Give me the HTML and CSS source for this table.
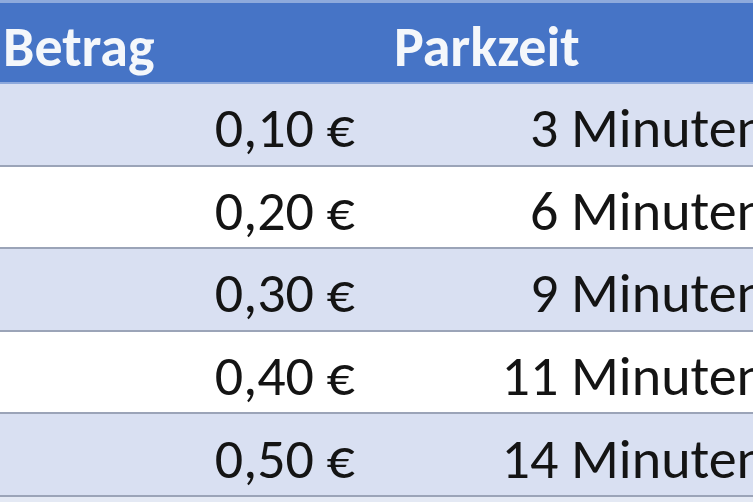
FILE: index.html
```html
<!DOCTYPE html>
<html lang="de">
<head>
<meta charset="utf-8">
<title>Parkgebühren</title>
<link rel="stylesheet" href="styles.css">
</head>
<body>
<div class="sheet">
  <div class="row head">
    <div class="cell c1">Betrag</div>
    <div class="cell c2">Parkzeit</div>
  </div>
  <div class="row band">
    <div class="cell c1 num">0,10 €</div>
    <div class="cell c2 num">3 Minuten</div>
  </div>
  <div class="row plain">
    <div class="cell c1 num">0,20 €</div>
    <div class="cell c2 num">6 Minuten</div>
  </div>
  <div class="row band">
    <div class="cell c1 num">0,30 €</div>
    <div class="cell c2 num">9 Minuten</div>
  </div>
  <div class="row plain">
    <div class="cell c1 num">0,40 €</div>
    <div class="cell c2 num">11 Minuten</div>
  </div>
  <div class="row band">
    <div class="cell c1 num">0,50 €</div>
    <div class="cell c2 num">14 Minuten</div>
  </div>
</div>
</body>
</html>
```
FILE: styles.css
```css
html, body {
  margin: 0;
  padding: 0;
  width: 753px;
  height: 502px;
  overflow: hidden;
  background: #e4e9f4;
}

.sheet {
  display: flex;
  flex-direction: column;
  width: 800px;
  font-family: "Carlito", "Lato", "Open Sans", sans-serif;
  font-size: 56px;
  color: #141414;
}

.row {
  display: grid;
  grid-template-columns: 386px 394px;
  height: 80.6px;
  border-bottom: 2px solid #9ba4b8;
}

.row.head {
  height: 79px;
  background: #4674c6;
  border-top: 3px solid #8eaadc;
  border-bottom: 2px solid #8ea9dc;
  color: #f4f7fb;
  font-weight: bold;
}

.band { background: #d9e0f2; }
.plain { background: #ffffff; }

.cell {
  display: flex;
  align-items: center;
  padding-top: 8px;
  white-space: nowrap;
  overflow: hidden;
}

.head .c1 { padding-left: 3px; }
.head .c2 { padding-left: 8px; }

.num { justify-content: flex-end; }
.c1.num { padding-right: 31px; }
.c2.num { padding-right: 14px; }
```
